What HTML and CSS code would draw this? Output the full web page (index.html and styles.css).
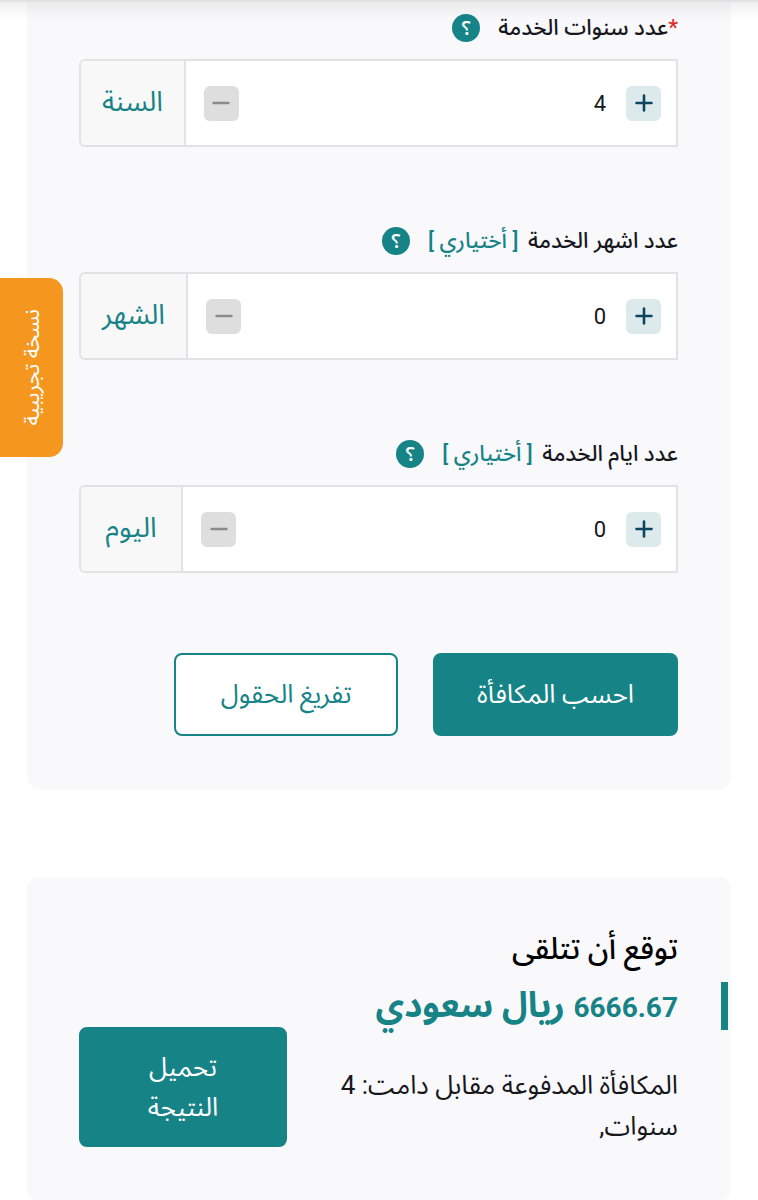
FILE: index.html
```html
<!DOCTYPE html>
<html lang="ar" dir="rtl">
<head>
    <meta charset="UTF-8">
    <meta name="viewport" content="width=device-width, initial-scale=1.0">
    <title>حاسبة مكافأة نهاية الخدمة</title>
    <link rel="stylesheet" href="styles.css">
</head>
<body>
    <div class="header-shadow"></div>
    <div class="beta-tag"><span>نسخة تجريبية</span></div>

    <main>
        <form class="card calculator" id="calculator">
            <div class="field">
                <div class="field-label">
                    <label for="years"><span class="required">*</span>عدد سنوات الخدمة</label>
                    <button type="button" class="help">؟</button>
                </div>
                <div class="stepper">
                    <button type="button" class="step plus" aria-label="زيادة"><svg viewBox="0 0 18 18"><path d="M9 1.5v15M1.5 9h15"/></svg></button>
                    <input type="text" inputmode="numeric" id="years" value="4">
                    <button type="button" class="step minus" aria-label="إنقاص"><svg viewBox="0 0 18 18"><path d="M1.5 9h15"/></svg></button>
                    <span class="unit">السنة</span>
                </div>
            </div>

            <div class="field">
                <div class="field-label">
                    <label for="months">عدد اشهر الخدمة <span class="optional">[ أختياري ]</span></label>
                    <button type="button" class="help">؟</button>
                </div>
                <div class="stepper">
                    <button type="button" class="step plus" aria-label="زيادة"><svg viewBox="0 0 18 18"><path d="M9 1.5v15M1.5 9h15"/></svg></button>
                    <input type="text" inputmode="numeric" id="months" value="0">
                    <button type="button" class="step minus" aria-label="إنقاص"><svg viewBox="0 0 18 18"><path d="M1.5 9h15"/></svg></button>
                    <span class="unit">الشهر</span>
                </div>
            </div>

            <div class="field">
                <div class="field-label">
                    <label for="days">عدد ايام الخدمة <span class="optional">[ أختياري ]</span></label>
                    <button type="button" class="help">؟</button>
                </div>
                <div class="stepper">
                    <button type="button" class="step plus" aria-label="زيادة"><svg viewBox="0 0 18 18"><path d="M9 1.5v15M1.5 9h15"/></svg></button>
                    <input type="text" inputmode="numeric" id="days" value="0">
                    <button type="button" class="step minus" aria-label="إنقاص"><svg viewBox="0 0 18 18"><path d="M1.5 9h15"/></svg></button>
                    <span class="unit">اليوم</span>
                </div>
            </div>

            <div class="actions">
                <button type="submit" class="btn btn-primary">احسب المكافأة</button>
                <button type="reset" class="btn btn-outline">تفريغ الحقول</button>
            </div>
        </form>

        <section class="card result">
            <div class="result-text">
                <h2>توقع أن تتلقى</h2>
                <p class="amount"><span class="number">6666.67</span> ريال سعودي</p>
                <p class="details">المكافأة المدفوعة مقابل دامت: 4 سنوات,</p>
            </div>
            <button type="button" class="btn btn-primary download">تحميل النتيجة</button>
        </section>
    </main>

    <script>
        const form = document.getElementById('calculator');

        document.querySelectorAll('.stepper').forEach(function (stepper) {
            const input = stepper.querySelector('input');
            stepper.querySelector('.plus').addEventListener('click', function () {
                input.value = Number(input.value) + 1;
            });
            stepper.querySelector('.minus').addEventListener('click', function () {
                input.value = Math.max(0, Number(input.value) - 1);
            });
        });

        form.addEventListener('submit', function (e) {
            e.preventDefault();
        });
    </script>
</body>
</html>
```
FILE: styles.css
```css
* {
    box-sizing: border-box;
}
body {
    margin: 0;
    background-color: #ffffff;
    color: #17171c;
    font-family: Roboto, "Noto Sans Arabic", "DejaVu Sans", sans-serif;
}
button, input {
    font-family: inherit;
}
button {
    cursor: pointer;
}
main {
    display: flex;
    flex-direction: column;
    gap: 88px;
    padding: 0 27px;
}
.header-shadow {
    position: absolute;
    top: 0;
    left: 0;
    right: 0;
    height: 20px;
    border-top: 2px solid #e2e2e3;
    background: linear-gradient(rgba(0, 0, 0, 0.06), rgba(0, 0, 0, 0));
}
.beta-tag {
    position: absolute;
    top: 278px;
    left: 0;
    width: 63px;
    height: 179px;
    display: flex;
    align-items: center;
    justify-content: center;
    border-radius: 0 14px 14px 0;
    background-color: #f5961f;
    color: #ffffff;
    font-size: 22px;
    white-space: nowrap;
}
.beta-tag span {
    writing-mode: vertical-rl;
    transform: rotate(180deg);
}
.card {
    border-radius: 12px;
    background-color: #f9f9fc;
}
.calculator {
    padding: 12px 53px 53px 52px;
    border-radius: 0 0 12px 12px;
}
.field {
    margin-bottom: 78px;
}
.field-label {
    display: flex;
    align-items: center;
    gap: 18px;
    height: 32px;
    margin-bottom: 15px;
    font-size: 22px;
    font-weight: 500;
}
.required {
    color: #e02b2b;
}
.optional {
    margin-right: 4px;
    color: #168387;
}
.help {
    width: 28px;
    height: 28px;
    padding: 0;
    border: none;
    border-radius: 50%;
    background-color: #168387;
    color: #ffffff;
    font-size: 20px;
    font-weight: 500;
    line-height: 28px;
}
.stepper {
    display: flex;
    align-items: center;
    height: 88px;
    overflow: hidden;
    padding-right: 15px;
    border: 2px solid #e2e2e4;
    border-radius: 6px 0 0 6px;
    background-color: #ffffff;
}
.stepper input {
    flex: 1;
    min-width: 0;
    padding: 0 20px;
    border: none;
    outline: none;
    background: none;
    color: #17171c;
    font-size: 22px;
}
.step {
    display: flex;
    align-items: center;
    justify-content: center;
    width: 35px;
    height: 35px;
    padding: 0;
    border: none;
    border-radius: 6px;
}
.step svg {
    width: 18px;
    height: 18px;
    fill: none;
    stroke-width: 2.6;
    stroke-linecap: round;
}
.plus {
    background-color: #dceaeb;
}
.plus svg {
    stroke: #0e4460;
}
.minus {
    background-color: #dedede;
}
.minus svg {
    stroke: #8c8c8c;
    stroke-width: 2.4;
}
.unit {
    display: flex;
    align-items: center;
    justify-content: center;
    min-width: 102px;
    height: 100%;
    margin-right: 18px;
    padding: 0 21px 2px;
    border-right: 2px solid #e2e2e4;
    background-color: #f8f8f8;
    color: #168387;
    font-size: 28px;
}
.actions {
    display: flex;
    gap: 35px;
    padding-top: 2px;
}
.btn {
    min-width: 224px;
    padding: 20px 42px;
    border: 2px solid #168387;
    border-radius: 8px;
    font-size: 26px;
    line-height: 39px;
}
.btn-primary {
    background-color: #168387;
    color: #ffffff;
}
.btn-outline {
    background-color: #ffffff;
    color: #168387;
}
.result {
    display: flex;
    align-items: flex-end;
    justify-content: space-between;
    gap: 40px;
    padding: 52px 53px 54px 52px;
}
.result-text {
    flex: 1;
}
.result h2 {
    margin: 0 0 14px;
    color: #000000;
    font-size: 30px;
    font-weight: 500;
    line-height: 39px;
}
.amount {
    margin: 0 -50px 35px 0;
    padding-right: 43px;
    border-right: 7px solid #168387;
    color: #168387;
    font-size: 35px;
    font-weight: bold;
    line-height: 48px;
}
.amount .number {
    font-size: 28px;
    line-height: 1;
}
.details {
    margin: 0;
    font-size: 26px;
    line-height: 41px;
}
.download {
    width: 208px;
    min-width: 0;
    padding: 18px 50px;
    line-height: 40px;
}
```
